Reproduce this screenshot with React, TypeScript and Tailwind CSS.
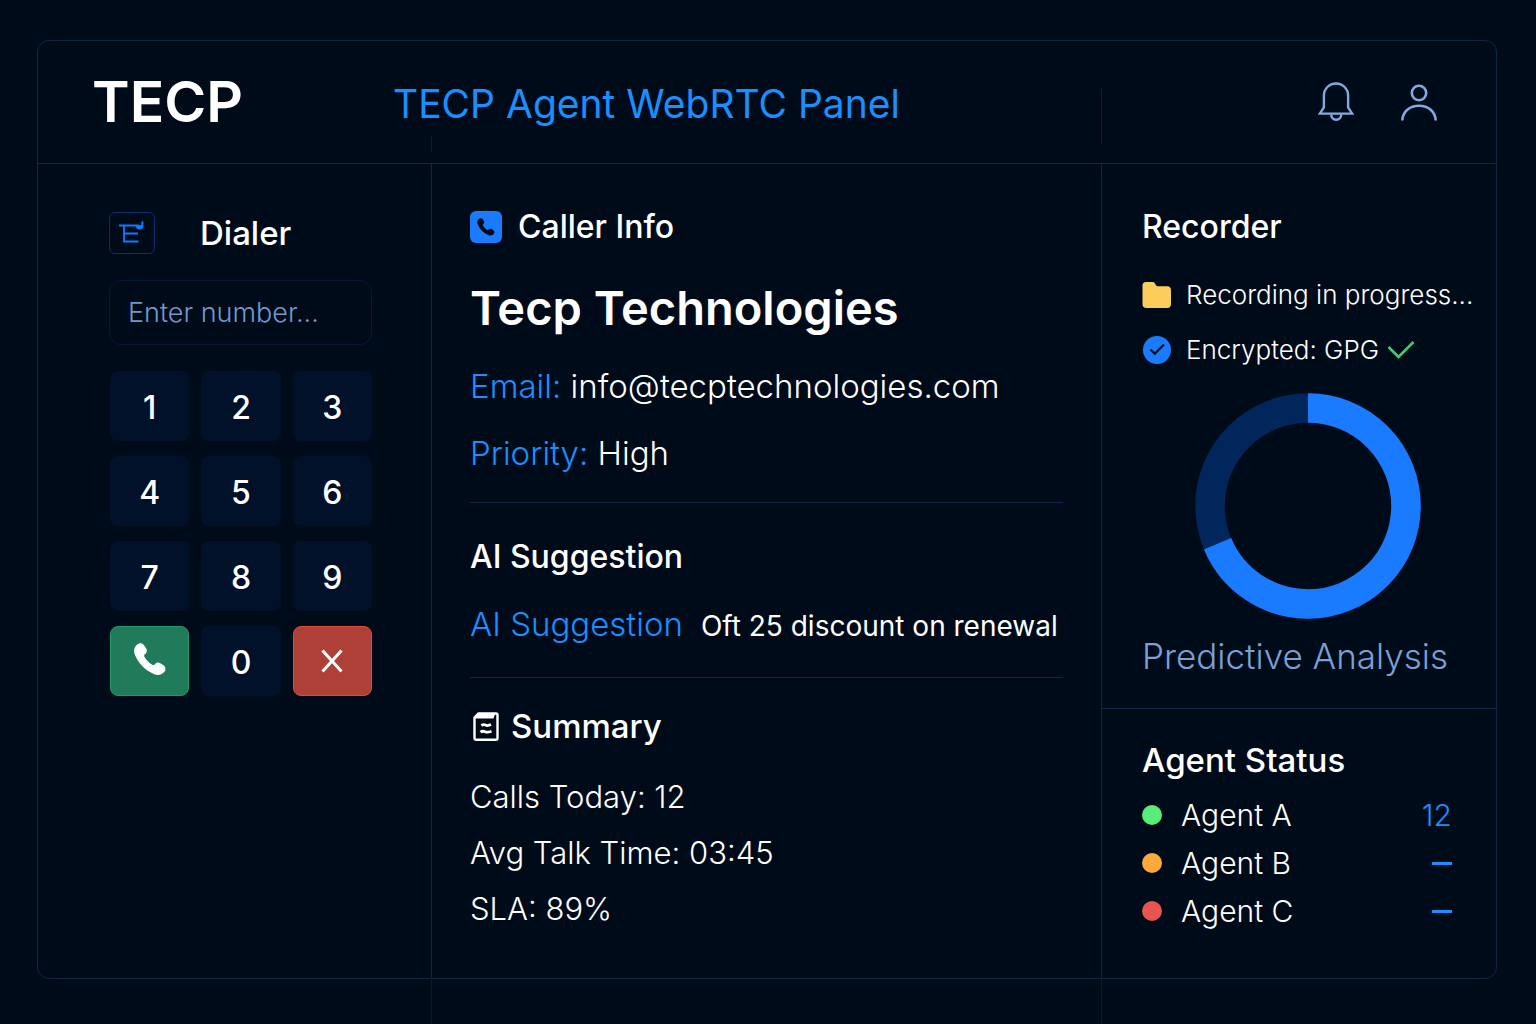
import { useState } from "react";

interface Agent {
  name: string;
  dot: string;
  calls: string | null;
}

const agents: Agent[] = [
  { name: "Agent A", dot: "bg-[#58ec78]", calls: "12" },
  { name: "Agent B", dot: "bg-[#fca93c]", calls: null },
  { name: "Agent C", dot: "bg-[#e85450]", calls: null },
];

const summary = [
  { label: "Calls Today", value: "12" },
  { label: "Avg Talk Time", value: "03:45" },
  { label: "SLA", value: "89%" },
];

const digits = ["1", "2", "3", "4", "5", "6", "7", "8", "9"];

const HANDSET =
  "M3.6 1.2C5.6-.2 8.6.1 10.2 2.4l2 3.1c1.2 2 .6 4.400-1.100 5.600-1 .7-1.300 1.500-.7 2.600 2 3.500 4.500 6 7.900 8.100 1.100.6 1.900.3 2.600-.6 1.300-1.700 3.600-2.200 5.500-1l3.100 2.100c2.200 1.600 2.500 4.500 1 6.500-2.500 3.200-6.600 4-10.800 2.200C10.900 27.200 4.300 20.500.8 11.600-.7 7.500.2 3.600 3.600 1.200Z";

function Handset({ className }: { className: string }) {
  return (
    <svg viewBox="0 0 32 33" className={className} fill="currentColor" aria-hidden="true">
      <path d={HANDSET} />
    </svg>
  );
}

function BellIcon() {
  return (
    <svg viewBox="0 0 36 40" className="h-10 w-9" fill="none" stroke="currentColor" strokeWidth="2.400" aria-hidden="true">
      <path d="M1.800 31.600 5.900 25.500V13.600C5.900 6.800 11.200 1.500 18 1.500s12.100 5.300 12.100 12.100V25.500l4.100 6.100Z" />
      <path d="M13.200 32.200c0 3.400 2 5.600 5 5.600s5-2.200 5-5.600" />
    </svg>
  );
}

function UserIcon() {
  return (
    <svg viewBox="0 0 36 40" className="h-10 w-9" fill="none" stroke="currentColor" strokeWidth="2.600" aria-hidden="true">
      <circle cx="18" cy="11" r="7.200" />
      <path d="M1.300 38.500C1.800 29.500 8.600 23.800 18 23.800S34.200 29.500 34.700 38.500" />
    </svg>
  );
}

function BrandIcon() {
  return (
    <svg viewBox="0 0 26 24" className="h-6 w-6.5" fill="none" stroke="#0f7bff" strokeWidth="1.800" aria-hidden="true">
      <path d="M0 4.500h20M5 4.500V20.500H19.500M5 12.500H19" />
      <path d="M17.500 4.500h5L23 .5h1v5.500l-1.500 2h-4l-1.500-2Z" fill="#0f7bff" strokeWidth=".8" />
    </svg>
  );
}

function NoteIcon() {
  return (
    <svg viewBox="0 0 26 30" className="h-7.5 w-6.5" fill="none" stroke="#fff" aria-hidden="true">
      <path d="M1.500 6.500 5.500 2.500H23q1.500 0 1.500 1.500V27q0 1.800-1.800 1.800H3.300q-1.800 0-1.800-1.800Z" strokeWidth="2.400" />
      <path d="M2 7.500 6 2H22.500L20.500 7.500Z" fill="#fff" stroke="none" />
      <path d="M8.500 14.600q1.800-1.600 4-.5t5.500-.5M7.500 21.200q2-1.600 4.500-.5t6.500-.5" strokeWidth="2.800" />
    </svg>
  );
}

function FolderIcon() {
  return (
    <svg viewBox="0 0 30 26" className="h-6.5 w-7.5 shrink-0" aria-hidden="true">
      <path d="M4 0h6.500q1.500 0 2.300 1.300l1 1.700q.7 1.200 2 1.200H25Q29 4.200 29 8.200V22q0 4-4 4H4.500Q.5 26 .5 22V3.500Q.5 0 4 0Z" fill="#fdcd5c" />
    </svg>
  );
}

function VerifiedIcon() {
  return (
    <svg viewBox="0 0 30 28" className="h-7 w-7.5 shrink-0" aria-hidden="true">
      <circle cx="15" cy="14" r="14" fill="#1a7bff" />
      <path d="m8.500 13.500 4.300 4.200L22 8.500" fill="none" stroke="#000b1a" strokeWidth="2.200" />
    </svg>
  );
}

function Donut({ value }: { value: number }) {
  return (
    <svg viewBox="0 0 226 226" className="size-[226px]" fill="none" strokeWidth="29.500" role="img" aria-label="Predictive Analysis">
      <circle cx="113" cy="113" r="98" stroke="#00265c" />
      <circle
        cx="113"
        cy="113"
        r="98"
        stroke="#1a7bff"
        pathLength={100}
        strokeDasharray={`${value} ${100 - value}`}
        transform="rotate(-90 113 113)"
      />
    </svg>
  );
}

export default function App() {
  const [number, setNumber] = useState("");

  const press = (digit: string) => setNumber((prev) => prev + digit);

  const keyClass =
    "flex h-[70px] items-center justify-center rounded-lg bg-[#001129] pt-1 text-[32px] font-medium hover:bg-[#001a3c]";

  return (
    <div className="flex min-h-screen flex-col bg-[#000b1a] pt-10 pr-[39px] pb-[45px] pl-[37px] font-['Inter',sans-serif] text-white">
      <div className="flex flex-1 flex-col rounded-xl border border-[#0d2747]">
        <header className="flex h-[123px] items-center border-b border-[#0d2747] pr-[59px] pl-[54px]">
          <div className="w-[301px] text-[57px] leading-[60px] font-semibold">TECP</div>
          <h1 className="flex-1 pt-1 text-[39px] leading-[50px] text-[#1a90ff]">TECP Agent WebRTC Panel</h1>
          <div className="flex gap-[47px] text-[#82aae0]">
            <button type="button" aria-label="Notifications">
              <BellIcon />
            </button>
            <button type="button" aria-label="Profile">
              <UserIcon />
            </button>
          </div>
        </header>

        <main className="grid flex-1 grid-cols-[minmax(0,394fr)_minmax(0,670fr)_minmax(0,394fr)]">
          {/* Dialer */}
          <section className="relative border-r border-[#0d2747] pt-12 pr-[59px] pl-[71px] before:absolute before:-right-px before:bottom-full before:mb-3 before:h-4 before:w-px before:bg-[#081d38] after:absolute after:top-full after:-right-px after:h-[46px] after:w-px after:bg-[#061a33]">
            <div className="flex items-center gap-[45px]">
              <div className="flex h-[42px] w-[46px] items-center justify-center rounded-md border border-[#053273]">
                <BrandIcon />
              </div>
              <h2 className="text-[33px] leading-10 font-medium">Dialer</h2>
            </div>

            <input
              type="tel"
              aria-label="Phone number"
              placeholder="Enter number..."
              value={number}
              onChange={(e) => setNumber(e.target.value)}
              className="mt-[26px] h-[65px] w-full rounded-xl border border-[#03193a] bg-transparent px-[18px] text-[27px] font-light outline-none placeholder:text-[#7399cb]"
            />

            <div className="mt-[26px] grid grid-cols-3 gap-x-3 gap-y-[15px] pl-px">
              {digits.map((digit) => (
                <button key={digit} type="button" className={keyClass} onClick={() => press(digit)}>
                  {digit}
                </button>
              ))}
              <button
                type="button"
                aria-label="Call"
                className="flex h-[70px] items-center justify-center rounded-lg border border-[#21996a] bg-[#207b5a] pb-1"
              >
                <Handset className="h-[33px] w-8" />
              </button>
              <button type="button" className={keyClass} onClick={() => press("0")}>
                0
              </button>
              <button
                type="button"
                aria-label="Hang up"
                onClick={() => setNumber("")}
                className="flex h-[70px] items-center justify-center rounded-lg border border-[#e04a3c] bg-[#ae4038]"
              >
                <svg viewBox="0 0 22 24" className="h-6 w-5.5" stroke="#fff" strokeWidth="3" aria-hidden="true">
                  <path d="M1.500 1.500 20.500 22.500M20.500 1.500 1.500 22.500" />
                </svg>
              </button>
            </div>
          </section>

          {/* Caller */}
          <section className="relative border-r border-[#0d2747] px-[38px] pt-[43px] before:absolute before:-right-px before:bottom-full before:mb-5 before:h-14 before:w-px before:bg-[#081d38] after:absolute after:top-full after:-right-px after:h-[46px] after:w-px after:bg-[#061a33]">
            <div className="border-b border-[#0d2747] pb-[29px]">
              <div className="flex items-center gap-4">
                <div className="flex size-8 items-center justify-center rounded-md bg-[#1a7bff] text-[#000b1a]">
                  <Handset className="h-[18px] w-[18px]" />
                </div>
                <h2 className="text-[32px] leading-10 font-medium">Caller Info</h2>
              </div>
              <p className="mt-[31px] text-[47px] leading-[60px] font-semibold">Tecp Technologies</p>
              <p className="mt-7 text-[33px] leading-10 font-light">
                <span className="text-[#1a90ff]">Email:</span> info@tecptechnologies.com
              </p>
              <p className="mt-[27px] text-[33px] leading-10 font-light">
                <span className="text-[#1a90ff]">Priority:</span> High
              </p>
            </div>

            <div className="border-b border-[#0d2747] pt-[34px] pb-[33px]">
              <h2 className="text-[32px] leading-10 font-medium">AI Suggestion</h2>
              <div className="mt-[27px] flex items-baseline gap-[18px] whitespace-nowrap">
                <span className="text-[33px] leading-10 font-light text-[#1a90ff]">AI Suggestion</span>
                <span className="text-[28px] leading-9">Oft 25 discount on renewal</span>
              </div>
            </div>

            <div className="pt-7">
              <div className="flex items-center gap-3 pl-[3px]">
                <NoteIcon />
                <h2 className="text-[33px] leading-10 font-medium">Summary</h2>
              </div>
              <ul className="mt-[31px] flex flex-col gap-4 text-[31px] leading-10 font-light">
                {summary.map((row) => (
                  <li key={row.label}>
                    {row.label}: {row.value}
                  </li>
                ))}
              </ul>
            </div>
          </section>

          {/* Recorder + agents */}
          <div>
            <section className="border-b border-[#0d2747] pt-[43px] pr-[23px] pb-8 pl-10 whitespace-nowrap">
              <h2 className="text-[32px] leading-10 font-medium">Recorder</h2>
              <div className="mt-7 flex items-center gap-[14px]">
                <FolderIcon />
                <span className="text-[26px] leading-10 font-light">Recording in progress...</span>
              </div>
              <div className="mt-[15px] flex items-center gap-[14px]">
                <VerifiedIcon />
                <span className="flex items-center gap-2 text-[26px] leading-10 font-light">
                  Encrypted: GPG
                  <svg viewBox="0 0 28 18" className="h-[18px] w-7" fill="none" stroke="#3fcf72" strokeWidth="2.600" aria-hidden="true">
                    <path d="M1.500 6 11.500 16 26.500 1" />
                  </svg>
                </span>
              </div>
              <div className="mt-[23px] flex justify-center">
                <Donut value={68.7} />
              </div>
              <p className="mt-[17px] text-[35px] leading-10 font-light text-[#7ba0d4]">Predictive Analysis</p>
            </section>

            <section className="pt-[31px] pr-11 pl-10">
              <h2 className="text-[33px] leading-10 font-medium">Agent Status</h2>
              <ul className="mt-[15px] flex flex-col gap-2 text-[30px] leading-10 font-light">
                {agents.map((agent) => (
                  <li key={agent.name} className="flex items-center">
                    <span className={`size-5 rounded-full ${agent.dot}`} />
                    <span className="ml-[19px] flex-1">{agent.name}</span>
                    {agent.calls ? (
                      <span className="text-[#1a90ff]">{agent.calls}</span>
                    ) : (
                      <span className="h-[3px] w-5 bg-[#1a90ff]" />
                    )}
                  </li>
                ))}
              </ul>
            </section>
          </div>
        </main>
      </div>
    </div>
  );
}
